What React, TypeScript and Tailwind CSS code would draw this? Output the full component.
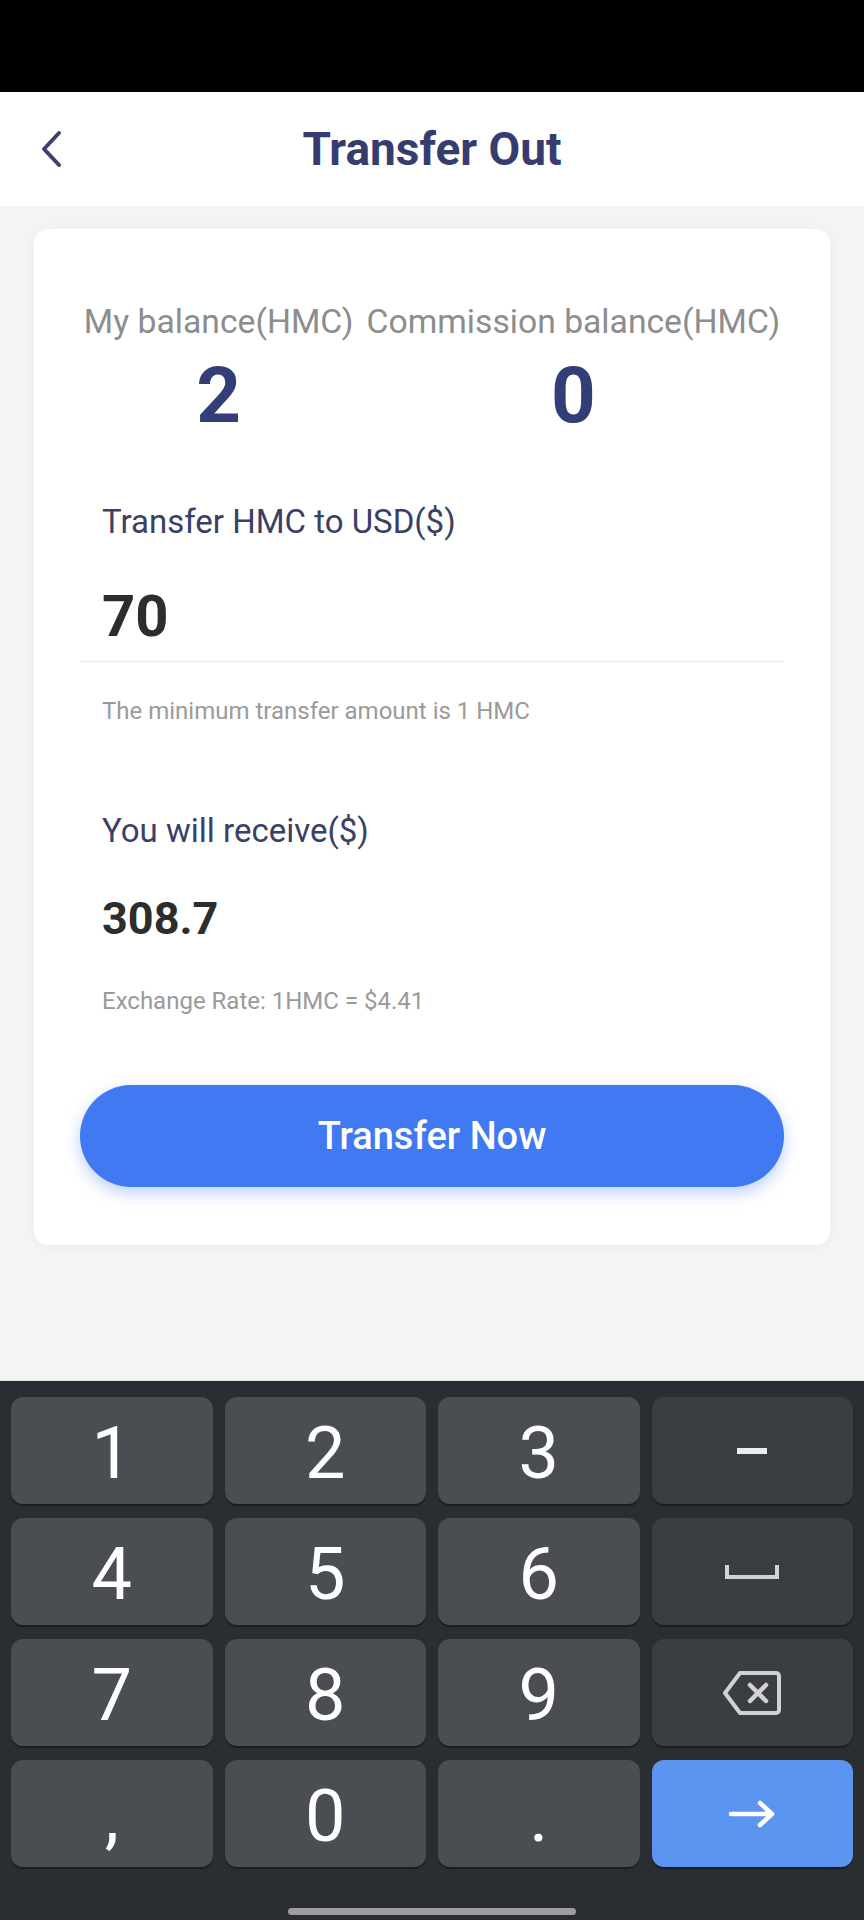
import type { ReactNode } from 'react';

function BackIcon() {
  return (
    <svg width="24" height="38" viewBox="0 0 24 38" fill="none">
      <path d="M20 3 L5 19 L20 35" stroke="#3c4170" strokeWidth="4" strokeLinecap="round" strokeLinejoin="round" />
    </svg>
  );
}

function SpaceIcon() {
  return (
    <svg width="56" height="16" viewBox="0 0 56 16" fill="none">
      <path d="M3 1 V13 H53 V1" stroke="#d2d2d2" strokeWidth="4" strokeLinejoin="miter" />
    </svg>
  );
}

function BackspaceIcon() {
  return (
    <svg width="62" height="48" viewBox="0 0 62 48" fill="none">
      <path
        d="M19 4 H55 a3 3 0 0 1 3 3 V41 a3 3 0 0 1 -3 3 H19 L4 24 Z"
        stroke="#d2d2d2"
        strokeWidth="4"
        strokeLinejoin="round"
      />
      <path d="M29 16 L45 32 M45 16 L29 32" stroke="#d2d2d2" strokeWidth="4.5" strokeLinecap="round" />
    </svg>
  );
}

function EnterIcon() {
  return (
    <svg width="48" height="28" viewBox="0 0 48 28" fill="none">
      <path d="M3 14 H44 M32 3 L44 14 L32 25" stroke="#ffffff" strokeWidth="4.5" strokeLinecap="round" strokeLinejoin="round" />
    </svg>
  );
}

function Key({ children, kind = 'digit' }: { children: ReactNode; kind?: 'digit' | 'fn' | 'enter' }) {
  const bg = {
    digit: 'bg-[#4a4d52] pt-[7px]',
    fn: 'bg-[#3a3d41]',
    enter: 'bg-[#5c95f0]',
  }[kind];
  return (
    <div
      className={`${bg} h-[107px] rounded-[12px] shadow-[0_2px_1px_rgba(0,0,0,0.35)] flex items-center justify-center text-white text-[72px] leading-none font-normal`}
    >
      {children}
    </div>
  );
}

export default function App() {
  return (
    <div className="w-[864px] h-[1920px] bg-[#f4f4f4] flex flex-col font-['Roboto',sans-serif]">
      {/* Status bar */}
      <div className="h-[92px] bg-black shrink-0" />

      {/* Header */}
      <div className="h-[114px] bg-white shrink-0 grid grid-cols-[1fr_auto_1fr] items-center">
        <div className="pl-[39px] flex items-center">
          <BackIcon />
        </div>
        <h1 className="text-[46px] font-bold text-[#363d6e] leading-none">Transfer Out</h1>
        <div />
      </div>

      {/* Content */}
      <div className="flex-1 px-[34px] pt-[23px]">
        <div className="bg-white rounded-[14px] shadow-[0_0_14px_rgba(0,0,0,0.04)] pt-[73px] pb-[58px] px-[46px]">
          {/* Balances */}
          <div className="flex justify-center gap-[13px]">
            {[
              { label: 'My balance(HMC)', value: '2' },
              { label: 'Commission balance(HMC)', value: '0' },
            ].map(({ label, value }) => (
              <div key={label} className="flex flex-col items-center">
                <p className="text-[33.7px] leading-[40px] text-[#8d8d8d] whitespace-nowrap">{label}</p>
                <p className="mt-[14px] text-[78px] leading-[80px] font-bold text-[#333d78]">{value}</p>
              </div>
            ))}
          </div>

          {/* Transfer input */}
          <div className="mt-[66px] pl-[22px]">
            <p className="text-[33px] leading-[40px] text-[#3a3f66]">Transfer HMC to USD($)</p>
            <p className="mt-[43px] text-[58px] leading-[62px] font-bold text-[#2d2d2d]">70</p>
          </div>
          <div className="mt-[14px] h-px bg-[#ececec]" />
          <p className="mt-[35px] pl-[22px] text-[24px] leading-[28px] text-[#9a9a9a]">
            The minimum transfer amount is 1 HMC
          </p>

          {/* Receive */}
          <div className="mt-[86px] pl-[22px]">
            <p className="text-[33px] leading-[40px] text-[#3a3f66]">You will receive($)</p>
            <p className="mt-[42px] text-[45px] leading-[52px] font-bold text-[#2d2d2d]">308.7</p>
            <p className="mt-[42px] text-[24px] leading-[28px] text-[#9a9a9a]">Exchange Rate: 1HMC = $4.41</p>
          </div>

          <button className="mt-[70px] w-full h-[102px] rounded-full bg-[#4079f2] shadow-[0_6px_16px_rgba(64,121,242,0.35)] text-white text-[38px] font-medium leading-none">
            Transfer Now
          </button>
        </div>
      </div>

      {/* Keyboard */}
      <div className="h-[540px] shrink-0 bg-[#2a2d31] border-t border-[#e0e0e0] flex flex-col">
        <div className="pt-[16px] px-[11px] grid grid-cols-4 gap-x-[12px] gap-y-[14px]">
          <Key>1</Key>
          <Key>2</Key>
          <Key>3</Key>
          <Key kind="fn">
            <span className="block w-[30px] h-[6px] bg-[#ececec]" />
          </Key>
          <Key>4</Key>
          <Key>5</Key>
          <Key>6</Key>
          <Key kind="fn">
            <SpaceIcon />
          </Key>
          <Key>7</Key>
          <Key>8</Key>
          <Key>9</Key>
          <Key kind="fn">
            <BackspaceIcon />
          </Key>
          <Key>,</Key>
          <Key>0</Key>
          <Key>.</Key>
          <Key kind="enter">
            <EnterIcon />
          </Key>
        </div>
        <div className="flex-1 flex items-end justify-center pb-[5px]">
          <div className="w-[288px] h-[7px] rounded-full bg-[#9e9e9e]" />
        </div>
      </div>
    </div>
  );
}
